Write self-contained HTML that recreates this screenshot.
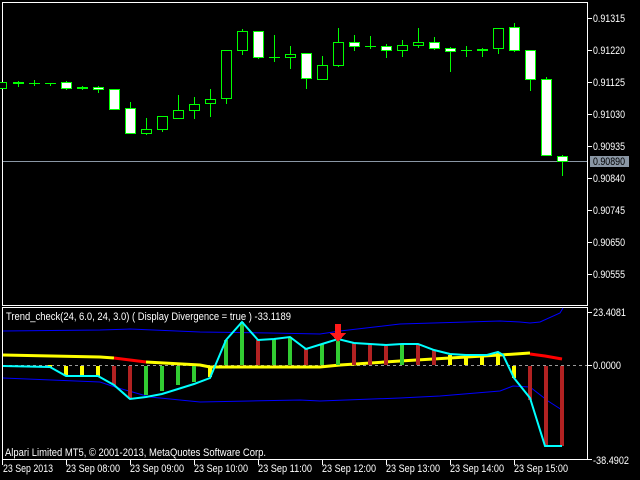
<!DOCTYPE html>
<html><head><meta charset="utf-8"><style>
html,body{margin:0;padding:0;background:#000;width:640px;height:480px;overflow:hidden}
svg{display:block}
text{font-family:"Liberation Sans",sans-serif;font-size:11px;fill:#fff}
</style></head><body>
<svg width="640" height="480" viewBox="0 0 640 480" xmlns="http://www.w3.org/2000/svg" shape-rendering="crispEdges">
<rect width="640" height="480" fill="#000"/>
<rect x="2.5" y="2.5" width="585" height="303" fill="none" stroke="#fff"/>
<rect x="2.5" y="307.5" width="585" height="152" fill="none" stroke="#fff"/>
<line x1="3" y1="161.5" x2="587" y2="161.5" stroke="#8a97a5"/>
<g stroke="#fff">
<line x1="588" y1="18.5" x2="592" y2="18.5"/><line x1="588" y1="50.5" x2="592" y2="50.5"/>
<line x1="588" y1="82.5" x2="592" y2="82.5"/><line x1="588" y1="114.5" x2="592" y2="114.5"/>
<line x1="588" y1="146.5" x2="592" y2="146.5"/><line x1="588" y1="178.5" x2="592" y2="178.5"/>
<line x1="588" y1="210.5" x2="592" y2="210.5"/><line x1="588" y1="242.5" x2="592" y2="242.5"/>
<line x1="588" y1="274.5" x2="592" y2="274.5"/>
<line x1="588" y1="312.5" x2="592" y2="312.5"/><line x1="588" y1="365.5" x2="592" y2="365.5"/>
<line x1="588" y1="459.5" x2="592" y2="459.5"/>
</g>
<g lengthAdjust="spacingAndGlyphs">
<text x="593" y="22" textLength="32" lengthAdjust="spacingAndGlyphs">0.91315</text>
<text x="593" y="54" textLength="32" lengthAdjust="spacingAndGlyphs">0.91220</text>
<text x="593" y="86" textLength="32" lengthAdjust="spacingAndGlyphs">0.91125</text>
<text x="593" y="118" textLength="32" lengthAdjust="spacingAndGlyphs">0.91030</text>
<text x="593" y="150" textLength="32" lengthAdjust="spacingAndGlyphs">0.90935</text>
<rect x="590" y="156" width="39" height="11" fill="#8a97a5"/>
<text x="593" y="165" textLength="32" lengthAdjust="spacingAndGlyphs" style="fill:#000">0.90890</text>
<text x="593" y="182" textLength="32" lengthAdjust="spacingAndGlyphs">0.90840</text>
<text x="593" y="214" textLength="32" lengthAdjust="spacingAndGlyphs">0.90745</text>
<text x="593" y="246" textLength="32" lengthAdjust="spacingAndGlyphs">0.90650</text>
<text x="593" y="278" textLength="32" lengthAdjust="spacingAndGlyphs">0.90555</text>
<text x="593" y="316" textLength="33" lengthAdjust="spacingAndGlyphs">23.4081</text>
<text x="593" y="369" textLength="28" lengthAdjust="spacingAndGlyphs">0.0000</text>
<text x="593" y="464" textLength="36" lengthAdjust="spacingAndGlyphs">-38.4902</text>
</g>
<g stroke="#00ff00" stroke-width="1" fill="none">
<line x1="18.5" y1="81" x2="18.5" y2="87"/><line x1="34.5" y1="80" x2="34.5" y2="86"/>
<line x1="50.5" y1="83" x2="50.5" y2="86"/><line x1="66.5" y1="81" x2="66.5" y2="90"/>
<line x1="82.5" y1="86" x2="82.5" y2="90"/><line x1="98.5" y1="86" x2="98.5" y2="93"/>
<line x1="130.5" y1="102" x2="130.5" y2="108"/><line x1="146.5" y1="118" x2="146.5" y2="135"/>
<line x1="162.5" y1="129" x2="162.5" y2="132"/><line x1="178.5" y1="95" x2="178.5" y2="110"/>
<line x1="194.5" y1="97" x2="194.5" y2="119"/><line x1="210.5" y1="89" x2="210.5" y2="117"/>
<line x1="226.5" y1="98" x2="226.5" y2="104"/><line x1="242.5" y1="29" x2="242.5" y2="55"/>
<line x1="258.5" y1="57" x2="258.5" y2="59"/><line x1="274.5" y1="35" x2="274.5" y2="62"/>
<line x1="290.5" y1="46" x2="290.5" y2="69"/><line x1="306.5" y1="78" x2="306.5" y2="89"/>
<line x1="322.5" y1="56" x2="322.5" y2="65"/><line x1="338.5" y1="28" x2="338.5" y2="67"/>
<line x1="354.5" y1="35" x2="354.5" y2="51"/><line x1="370.5" y1="36" x2="370.5" y2="49"/>
<line x1="386.5" y1="44" x2="386.5" y2="58"/><line x1="402.5" y1="40" x2="402.5" y2="57"/>
<line x1="418.5" y1="28" x2="418.5" y2="48"/><line x1="434.5" y1="37" x2="434.5" y2="50"/>
<line x1="450.5" y1="47" x2="450.5" y2="72"/><line x1="466.5" y1="46" x2="466.5" y2="57"/>
<line x1="482.5" y1="48" x2="482.5" y2="57"/><line x1="498.5" y1="48" x2="498.5" y2="54"/>
<line x1="514.5" y1="23" x2="514.5" y2="52"/><line x1="530.5" y1="79" x2="530.5" y2="91"/>
<line x1="546.5" y1="77" x2="546.5" y2="79"/><line x1="562.5" y1="155" x2="562.5" y2="176"/>
<line x1="29" y1="83.5" x2="40" y2="83.5"/><line x1="45" y1="83.5" x2="56" y2="83.5"/>
<line x1="269" y1="57.5" x2="280" y2="57.5"/><line x1="365" y1="46.5" x2="376" y2="46.5"/>
<line x1="461" y1="50.5" x2="472" y2="50.5"/>
</g>
<g stroke="#00ff00" fill="#000">
<rect x="-1.5" y="82.5" width="8" height="6"/>
<rect x="13.5" y="82.5" width="10" height="1" fill="#00ff00"/>
<rect x="77.5" y="87.5" width="10" height="1" fill="#00ff00"/>
<rect x="141.5" y="129.5" width="10" height="4"/>
<rect x="157.5" y="116.5" width="10" height="13"/>
<rect x="173.5" y="110.5" width="10" height="8"/>
<rect x="189.5" y="104.5" width="10" height="6"/>
<rect x="205.5" y="99.5" width="10" height="4"/>
<rect x="221.5" y="50.5" width="10" height="48"/>
<rect x="237.5" y="31.5" width="10" height="19"/>
<rect x="285.5" y="54.5" width="10" height="3"/>
<rect x="317.5" y="65.5" width="10" height="14"/>
<rect x="333.5" y="42.5" width="10" height="23"/>
<rect x="397.5" y="45.5" width="10" height="5"/>
<rect x="413.5" y="42.5" width="10" height="3"/>
<rect x="477.5" y="49.5" width="10" height="1" fill="#00ff00"/>
<rect x="493.5" y="28.5" width="10" height="20"/>
</g>
<g stroke="#00ff00" fill="#fff">
<rect x="61.5" y="82.5" width="10" height="6"/>
<rect x="93.5" y="87.5" width="10" height="2"/>
<rect x="109.5" y="89.5" width="10" height="20"/>
<rect x="125.5" y="108.5" width="10" height="25"/>
<rect x="253.5" y="31.5" width="10" height="26"/>
<rect x="301.5" y="53.5" width="10" height="25"/>
<rect x="349.5" y="42.5" width="10" height="4"/>
<rect x="381.5" y="46.5" width="10" height="4"/>
<rect x="429.5" y="42.5" width="10" height="6"/>
<rect x="445.5" y="48.5" width="10" height="3"/>
<rect x="509.5" y="27.5" width="10" height="23"/>
<rect x="525.5" y="50.5" width="10" height="29"/>
<rect x="541.5" y="79.5" width="10" height="76"/>
<rect x="557.5" y="156.5" width="10" height="5"/>
</g>
<g shape-rendering="auto">
<polyline fill="none" stroke="#0000ff" stroke-width="1" points="3,331 100,330 130,329 200,332 270,333 320,334 340,331 400,324 500,321 520,322 530,323 540,322 560,313 563,308"/>
<polyline fill="none" stroke="#0000ff" stroke-width="1" points="3,378 100,382 115,387 150,397 170,399 200,402 250,401 300,400 320,401 400,398 440,396 500,391 513,386 530,387 548,401 562,410"/>
<line x1="3" y1="365.5" x2="587" y2="365.5" stroke="#999" stroke-dasharray="3,3"/>
<polyline fill="none" stroke="#ffff00" stroke-width="3" points="3,355 100,357 114,358"/>
<polyline fill="none" stroke="#ff0000" stroke-width="3" points="114,358 130,360 146,362"/>
<polyline fill="none" stroke="#ffff00" stroke-width="3" points="146,362 200,365 210,367 320,367 340,365 400,361 450,358 500,355 530,353"/>
<polyline fill="none" stroke="#ff0000" stroke-width="3" points="530,354 545,356 562,359"/>
</g>
<g>
<rect x="48" y="365" width="4" height="3" fill="#ffff00"/>
<rect x="64" y="366" width="4" height="10" fill="#ffff00"/>
<rect x="80" y="366" width="4" height="10" fill="#ffff00"/>
<rect x="96" y="366" width="4" height="10" fill="#ffff00"/>
<rect x="112" y="366" width="4" height="19" fill="#b22222"/>
<rect x="128" y="366" width="4" height="33" fill="#b22222"/>
<rect x="144" y="366" width="4" height="29" fill="#32cd32"/>
<rect x="160" y="366" width="4" height="25" fill="#32cd32"/>
<rect x="176" y="366" width="4" height="19" fill="#32cd32"/>
<rect x="192" y="366" width="4" height="16" fill="#32cd32"/>
<rect x="208" y="366" width="4" height="11" fill="#ffff00"/>
<rect x="224" y="340" width="4" height="25" fill="#32cd32"/>
<rect x="240" y="322" width="4" height="43" fill="#32cd32"/>
<rect x="256" y="340" width="4" height="25" fill="#b22222"/>
<rect x="272" y="339" width="4" height="26" fill="#32cd32"/>
<rect x="288" y="337" width="4" height="28" fill="#32cd32"/>
<rect x="304" y="349" width="4" height="16" fill="#b22222"/>
<rect x="320" y="344" width="4" height="21" fill="#32cd32"/>
<rect x="336" y="341" width="4" height="24" fill="#32cd32"/>
<rect x="352" y="343" width="4" height="22" fill="#b22222"/>
<rect x="368" y="344" width="4" height="21" fill="#b22222"/>
<rect x="384" y="346" width="4" height="19" fill="#b22222"/>
<rect x="400" y="344" width="4" height="21" fill="#32cd32"/>
<rect x="416" y="344" width="4" height="21" fill="#b22222"/>
<rect x="432" y="350" width="4" height="15" fill="#b22222"/>
<rect x="448" y="355" width="4" height="10" fill="#ffff00"/>
<rect x="464" y="355" width="4" height="10" fill="#ffff00"/>
<rect x="480" y="357" width="4" height="8" fill="#ffff00"/>
<rect x="496" y="352" width="4" height="13" fill="#ffff00"/>
<rect x="512" y="366" width="4" height="12" fill="#ffff00"/>
<rect x="528" y="366" width="4" height="34" fill="#b22222"/>
<rect x="544" y="366" width="4" height="80" fill="#b22222"/>
<rect x="560" y="366" width="4" height="80" fill="#b22222"/>
</g>
<polyline shape-rendering="auto" fill="none" stroke="#00ffff" stroke-width="2" points="3,366 50,367 66,376 98,376 114,385 130,399 146,397 162,394 178,389 194,384 210,378 226,340 242,322 258,340 274,339 290,337 306,349 322,344 338,339 354,343 370,344 386,345 402,344 418,344 434,350 450,354 466,355 487,355 498,352 503,355 514,378 530,398 545,446 562,446"/>
<polygon points="335,324 341,324 341,333 346,333 338,342 330,333 335,333" fill="#ff1a1a"/>
<text x="6" y="320" textLength="285" lengthAdjust="spacingAndGlyphs">Trend_check(24, 6.0, 24, 3.0) ( Display Divergence = true ) -33.1189</text>
<text x="5" y="456" textLength="261" lengthAdjust="spacingAndGlyphs">Alpari Limited MT5, © 2001-2013, MetaQuotes Software Corp.</text>
<g stroke="#fff">
<line x1="2.5" y1="460" x2="2.5" y2="465"/><line x1="66.5" y1="460" x2="66.5" y2="465"/>
<line x1="130.5" y1="460" x2="130.5" y2="465"/><line x1="194.5" y1="460" x2="194.5" y2="465"/>
<line x1="258.5" y1="460" x2="258.5" y2="465"/><line x1="322.5" y1="460" x2="322.5" y2="465"/>
<line x1="386.5" y1="460" x2="386.5" y2="465"/><line x1="450.5" y1="460" x2="450.5" y2="465"/>
<line x1="514.5" y1="460" x2="514.5" y2="465"/>
</g>
<text x="3" y="472" textLength="50" lengthAdjust="spacingAndGlyphs">23 Sep 2013</text>
<text x="66" y="472" textLength="54" lengthAdjust="spacingAndGlyphs">23 Sep 08:00</text>
<text x="130" y="472" textLength="54" lengthAdjust="spacingAndGlyphs">23 Sep 09:00</text>
<text x="194" y="472" textLength="54" lengthAdjust="spacingAndGlyphs">23 Sep 10:00</text>
<text x="258" y="472" textLength="54" lengthAdjust="spacingAndGlyphs">23 Sep 11:00</text>
<text x="322" y="472" textLength="54" lengthAdjust="spacingAndGlyphs">23 Sep 12:00</text>
<text x="386" y="472" textLength="54" lengthAdjust="spacingAndGlyphs">23 Sep 13:00</text>
<text x="450" y="472" textLength="54" lengthAdjust="spacingAndGlyphs">23 Sep 14:00</text>
<text x="514" y="472" textLength="54" lengthAdjust="spacingAndGlyphs">23 Sep 15:00</text>
</svg>
</body></html>
